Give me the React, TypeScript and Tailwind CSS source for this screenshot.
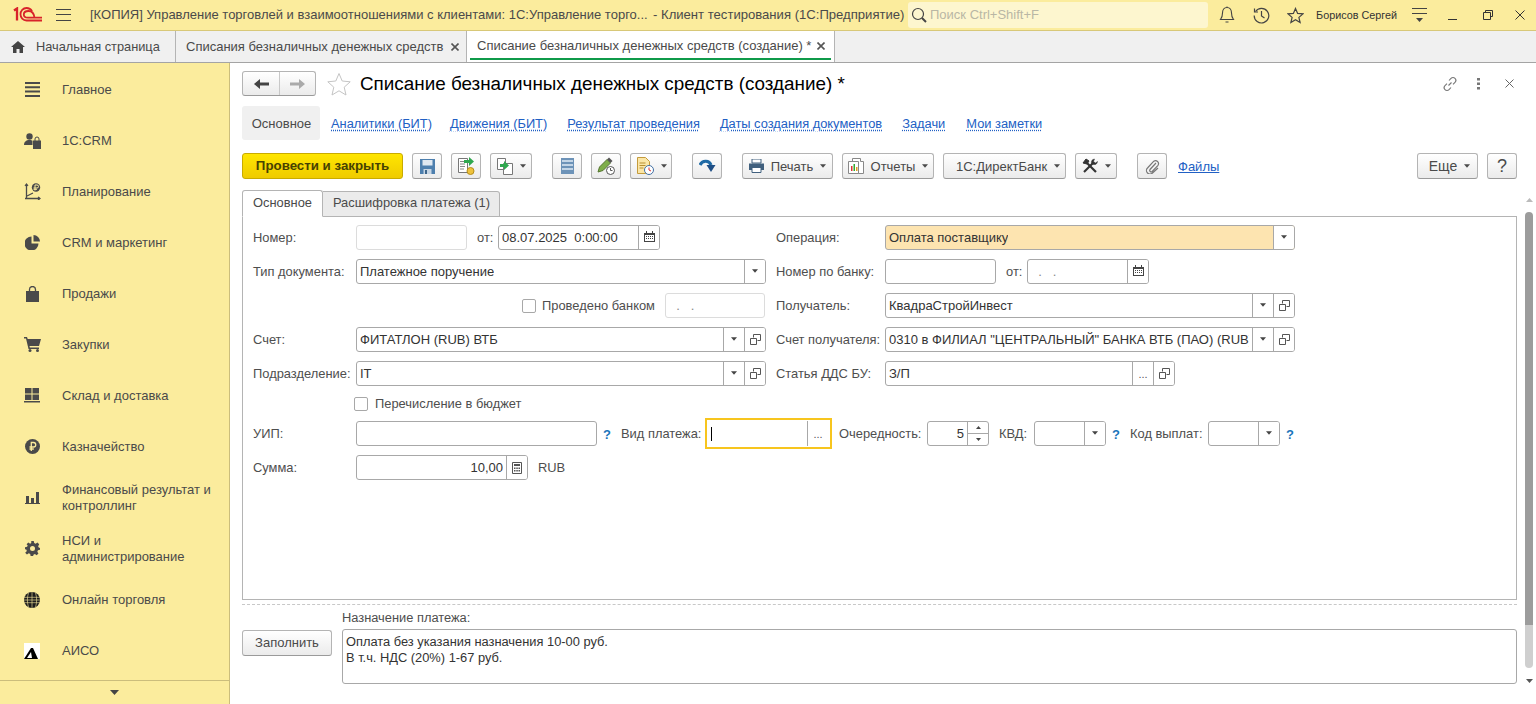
import React from "react";

const Drop = ({ c = "#4a4a4a", s = 6 }: { c?: string; s?: number }) => (
  <svg width={s} height="4" viewBox="0 0 7 4" className="shrink-0"><path d="M0 0h7L3.500 4z" fill={c} /></svg>
);
const OpenIc = () => (
  <svg width="11" height="11" viewBox="0 0 11 11" fill="none" stroke="#555"><path d="M3.500 3.500V.5h7v6h-3" /><path d="M.5 4.500h6v6h-6z" fill="#fff" /></svg>
);
const Cal = () => (
  <svg width="11" height="11" viewBox="0 0 11 11"><path d="M0 2h11v9H0z" fill="#444" /><path d="M2 0h1v2H2zM8 0h1v2H8z" fill="#444" /><path d="M1 4h9v6H1z" fill="#fff" /><path d="M2 5h1v1H2zM4 5h1v1H4zM6 5h1v1H6zM8 5h1v1H8zM2 7h1v1H2zM4 7h1v1H4zM6 7h1v1H6zM8 7h1v1H8z" fill="#444" /></svg>
);
const Calc = () => (
  <svg width="10" height="12" viewBox="0 0 10 12"><path d="M.5.500h9v11h-9z" fill="#fff" stroke="#555" /><path d="M2 2h6v2H2zM2 5.500h1.500V7H2zM4.300 5.500h1.500V7H4.300zM6.500 5.500H8V7H6.500zM2 8h1.500v1.500H2zM4.300 8h1.500v1.500H4.300zM6.500 8H8v1.500H6.500z" fill="#555" /></svg>
);

type Kind = "drop" | "open" | "dots" | "cal" | "calc";
const Addon = ({ k }: { k: Kind }) => (
  <div className="w-[21px] h-full shrink-0 bg-white border-l border-[#a8a8a8] flex items-center justify-center text-[#555]">
    {k === "drop" && <div className="-mt-[2px]"><Drop c="#444" s={6} /></div>}
    {k === "open" && <div className="-mt-[1px]"><OpenIc /></div>}
    {k === "dots" && <span className="text-[11px] leading-none mt-[2px]">...</span>}
    {k === "cal" && <div className="-mt-[2px]"><Cal /></div>}
    {k === "calc" && <Calc />}
  </div>
);

const Field = ({
  w, text = "", add = [], bg = "bg-white", border = "border-[#a8a8a8]", right = false, color = "text-[#333]",
}: { w: string; text?: string; add?: Kind[]; bg?: string; border?: string; right?: boolean; color?: string }) => (
  <div className={`${w} h-[25px] shrink-0 border ${border} ${bg} rounded-[3px] flex items-stretch overflow-hidden`}>
    <div className={`flex-1 min-w-0 px-[3px] flex items-center text-[13px] ${color} ${right ? "justify-end" : ""}`}>
      <span className="block whitespace-pre overflow-hidden">{text}</span>
    </div>
    {add.map((k, i) => <Addon key={i} k={k} />)}
  </div>
);

const Label = ({ w, children }: { w: string; children: React.ReactNode }) => (
  <div className={`${w} shrink-0 text-[12.9px] text-[#4e4e4e] whitespace-nowrap`}>{children}</div>
);
const Q = () => <span className="text-[13px] font-bold text-[#1b75bb]">?</span>;

const Btn = ({ w, children, arrow = false, cls = "" }: { w: string; children?: React.ReactNode; arrow?: boolean; cls?: string }) => (
  <div className={`${w} ${cls} h-[26px] shrink-0 rounded-[3px] border border-[#b4b4b4] border-b-[#9a9a9a] bg-gradient-to-b from-white to-[#ebebeb] flex items-center justify-center gap-[7px] text-[13px] text-[#4a4a4a] whitespace-nowrap`}>
    {children}
    {arrow && <Drop />}
  </div>
);

const TabLink = ({ children, cls = "" }: { children: React.ReactNode; cls?: string }) => (
  <span className={`${cls} text-[12.85px] text-[#2160c4] underline decoration-dotted underline-offset-2 whitespace-nowrap`}>{children}</span>
);

const G = "#4a4a4a";
const side: { t: React.ReactNode; i: React.ReactNode }[] = [
  { t: "Главное", i: <svg width="15" height="15" viewBox="0 0 15 15" fill={G}><path d="M0 0h15v2H0zM0 4.300h15v2H0zM0 8.600h15v2H0zM0 13h15v2H0z" /></svg> },
  { t: "1С:CRM", i: <svg width="17" height="16" viewBox="0 0 17 16" fill={G}><circle cx="5.500" cy="3.500" r="3.200" /><path d="M0 12c0-3 2-5 5.500-5 1.500 0 2.500.3 3 .7V12zM9 7.500h8V16H9z" /><path d="M11 8V6a2 2 0 0 1 4 0v2" fill="none" stroke={G} /></svg> },
  { t: "Планирование", i: <svg width="17" height="17" viewBox="0 0 17 17" fill="none" stroke={G}><path d="M2.500 1v15M1 15.500h15" strokeWidth="1.300" /><path d="M1 3l1.500-2L4 3M14 14l2 1.500-2 1.500M3 13l6-3" strokeWidth="1.200" /><circle cx="12" cy="4.500" r="4.200" fill={G} stroke="none" /><path d="M11 7.500V2h2a1.500 1.500 0 0 1 0 3H9.500M9.500 6.300H13" stroke="#fbec9d" /></svg> },
  { t: "CRM и маркетинг", i: <svg width="15" height="15" viewBox="0 0 15 15" fill={G}><path d="M6.500 1.500v7h7a7 7 0 1 1-7-7z" /><path d="M8.500 0a6.500 6.500 0 0 1 6.500 6.500H8.500z" /></svg> },
  { t: "Продажи", i: <svg width="13" height="16" viewBox="0 0 13 16" fill={G}><path d="M0 5h13v11H0z" /><path d="M3.500 7V3.500a3 3 0 0 1 6 0V7" fill="none" stroke={G} strokeWidth="1.300" /></svg> },
  { t: "Закупки", i: <svg width="17" height="15" viewBox="0 0 17 15" fill={G}><path d="M0 0h3l.7 2H17l-2 7H5.500l.3 1.500H15V12H4.500L2 1.500H0z" /><circle cx="6" cy="13.500" r="1.500" /><circle cx="13.500" cy="13.500" r="1.500" /></svg> },
  { t: "Склад и доставка", i: <svg width="16" height="15" viewBox="0 0 16 15" fill={G}><path d="M1 0h6.500v5.500H1zM8.500 0H15v5.500H8.500zM1 6.500h6.500V12H1zM8.500 6.500H15V12H8.500zM0 13h16v1.500H0z" /></svg> },
  { t: "Казначейство", i: <svg width="15" height="15" viewBox="0 0 15 15"><circle cx="7.500" cy="7.500" r="7.500" fill={G} /><path d="M6.300 12V3.500h2.200a2.200 2.200 0 0 1 0 4.500H4.500M4.500 10h4.300" fill="none" stroke="#fbec9d" strokeWidth="1.300" /></svg> },
  { t: <>Финансовый результат и<br />контроллинг</>, i: <svg width="15" height="12" viewBox="0 0 15 12" fill={G}><path d="M1 4h3v7H1zM6 6h3v5H6zM11 0h3v11h-3zM0 11h15v1H0z" /></svg> },
  { t: <>НСИ и<br />администрирование</>, i: <svg width="15" height="15" viewBox="0 0 24 24" fill={G}><path fillRule="evenodd" d="M10 0h4l.7 3.300 2.300 1 2.900-1.800 2.800 2.800L21 8.200l1 2.300 2 .5v3l-3.300.7-1 2.300 1.800 2.900-2.800 2.800-2.900-1.800-2.300 1-.5 2h-4l-.7-3.300-2.300-1-2.900 1.800-2.800-2.800L3 15.800l-1-2.300-2-.5v-3l3.300-.7 1-2.300L2.500 5.300l2.800-2.800L8.200 4.300l1.800-1zM12 8a4 4 0 1 0 0 8 4 4 0 0 0 0-8z" /></svg> },
  { t: "Онлайн торговля", i: <svg width="16" height="16" viewBox="0 0 16 16"><circle cx="8" cy="8" r="8" fill="#1c1c1c" /><path d="M0 5.300h16M0 8h16M0 10.700h16M8 0v16M4.500 1c-1.500 4-1.500 10 0 14M11.500 1c1.500 4 1.500 10 0 14" stroke="#fbec9d" strokeWidth=".6" fill="none" /></svg> },
  { t: "АИСО", i: <svg width="16" height="16" viewBox="0 0 16 16"><path d="M0 0h16v16H0z" fill="#fff" /><path d="M0 16L7 5l2 0 5 11z" fill="#000" /><path d="M3 15l4-6 1 6z" fill="#fff" /></svg> },
];

export default function App() {
  return (
    <div className="w-[1536px] h-[704px] overflow-hidden flex flex-col bg-white font-['Liberation_Sans',Arial,sans-serif]">
      {/* Title bar */}
      <div className="h-[31px] shrink-0 bg-[#fbec9d] border-b border-[#d8c878] flex items-center">
        <div className="w-[90px] shrink-0 flex items-center">
          <svg width="30" height="16" viewBox="0 0 30 16" className="ml-[13px]" fill="none" stroke="#d8232a" strokeWidth="1.800">
            <path d="M1 3.500L4 1.500V13.500" strokeWidth="2.300" />
            <path d="M19 4.200C18 2.300 16 1 13.500 1 10 1 7.500 3.800 7.500 7.200s2.500 6.300 6 6.300H29" />
            <path d="M21.500 10.500C20.800 5.500 18 4 15.500 4 12.500 4 10.800 5.400 10.800 7.400s1.700 3.200 4 3.200H29" />
          </svg>
          <svg width="15" height="12" viewBox="0 0 15 12" className="ml-[13px]" stroke="#444" fill="none"><path d="M0 .5h15M0 5.500h15M0 11.500h15" /></svg>
        </div>
        <div className="w-[563px] shrink-0 text-[13px] text-[#4a4a4a] whitespace-nowrap overflow-hidden">[КОПИЯ] Управление торговлей и взаимоотношениями с клиентами: 1С:Управление торго...</div>
        <div className="w-[255px] shrink-0 text-[13.1px] text-[#4a4a4a] whitespace-nowrap">- Клиент тестирования (1С:Предприятие)</div>
        <div className="w-[300px] h-[26px] shrink-0 bg-[#fdf6cf] rounded-[3px] flex items-center pl-[3px] gap-[2px]">
          <svg width="17" height="17" viewBox="0 0 17 17" fill="none" stroke="#444"><circle cx="7" cy="7" r="5.500" strokeWidth="1.200" /><path d="M11 11l4 4" strokeWidth="2" /></svg>
          <span className="text-[13px] text-[#b9b7a5] whitespace-nowrap">Поиск Ctrl+Shift+F</span>
        </div>
        <div className="w-[27px] shrink-0 flex justify-end">
          <svg width="16" height="18" viewBox="0 0 16 18" fill="none" stroke="#444"><path d="M8 1.500c-3 0-4.500 2.500-4.500 5.500 0 3-.8 5-2 6.500h13c-1.200-1.500-2-3.500-2-6.500 0-3-1.500-5.500-4.500-5.500zM6.500 16h3" strokeWidth="1.100" /><path d="M8 .5v1" /></svg>
        </div>
        <div className="w-[35px] shrink-0 flex justify-end">
          <svg width="17" height="17" viewBox="0 0 17 17" fill="none" stroke="#444" strokeWidth="1.200"><path d="M2.500 4.500A7.300 7.300 0 1 1 1.200 8.500" /><path d="M1.500 1.500v3.500h3.500M8.500 4v5l3 2" /></svg>
        </div>
        <div className="w-[34px] shrink-0 flex justify-end">
          <svg width="17" height="17" viewBox="0 0 24 24" fill="none" stroke="#444" strokeWidth="1.700"><path d="M12 2l3 7 7.500.7-5.700 5 1.700 7.300L12 18l-6.500 4 1.700-7.300-5.700-5L9 9z" /></svg>
        </div>
        <div className="w-[93px] shrink-0 text-right text-[10.8px] text-[#333] whitespace-nowrap">Борисов Сергей</div>
        <div className="w-[30px] shrink-0 flex justify-end">
          <svg width="15" height="14" viewBox="0 0 15 14"><path d="M0 .5h15M0 5.500h15" stroke="#444" fill="none" /><path d="M4 10h7l-3.500 4z" fill="#444" /></svg>
        </div>
        <div className="w-[46px] shrink-0 flex justify-center pl-[4px] pt-[9px]"><div className="w-[9px] h-[1px] bg-[#333]" /></div>
        <div className="w-[30px] shrink-0 flex justify-center">
          <svg width="10" height="10" viewBox="0 0 10 10" fill="none" stroke="#333"><path d="M2.500 2.500V.5h7v6h-2" /><path d="M.5 2.500h7v7h-7z" /></svg>
        </div>
        <div className="w-[34px] shrink-0 flex justify-center">
          <svg width="10" height="10" viewBox="0 0 10 10" stroke="#333" fill="none"><path d="M.5.500l9 9M9.500.500l-9 9" /></svg>
        </div>
      </div>

      {/* Tab bar */}
      <div className="h-[32px] shrink-0 bg-[#f0f0f0] border-b border-[#a4a4a4] flex items-stretch text-[13px] text-[#4a4a4a]">
        <div className="w-[176px] shrink-0 border-r border-[#b4b4b4] flex items-center">
          <svg width="14" height="12" viewBox="0 0 14 12" fill="#444" className="ml-[11px]"><path d="M7 0l7 6h-2v6H8.500V8h-3v4H2V6H0z" /></svg>
          <span className="ml-[11px] whitespace-nowrap text-[12.8px]">Начальная страница</span>
        </div>
        <div className="w-[291px] shrink-0 border-r border-[#b4b4b4] flex items-center pl-[10px] gap-[8px]">
          <span className="whitespace-nowrap">Списания безналичных денежных средств</span>
          <svg width="8" height="8" viewBox="0 0 8 8" stroke="#555" strokeWidth="1.600"><path d="M.5.500l7 7M7.500.500l-7 7" /></svg>
        </div>
        <div className="w-[368px] shrink-0 border-r border-[#b4b4b4] bg-white flex flex-col px-[3px] pb-[2px]">
          <div className="flex-1 flex items-center pl-[7px] gap-[6px] pt-[2px]">
            <span className="whitespace-nowrap">Списание безналичных денежных средств (создание) *</span>
            <svg width="8" height="8" viewBox="0 0 8 8" stroke="#555" strokeWidth="1.600"><path d="M.5.500l7 7M7.500.500l-7 7" /></svg>
          </div>
          <div className="h-[2px] bg-[#0f9a4a]" />
        </div>
      </div>

      <div className="flex-1 min-h-0 flex">
        {/* Sidebar */}
        <div className="w-[230px] shrink-0 bg-[#fbec9d] border-r border-[#cbbd7c] flex flex-col">
          {side.map((s, i) => (
            <div key={i} className="h-[51px] shrink-0 flex items-center text-[13px] leading-[16px] text-[#4a4a4a] pt-[2px]">
              <div className="w-[62px] shrink-0 pl-[2px] flex justify-center">{s.i}</div>
              <div className="whitespace-nowrap">{s.t}</div>
            </div>
          ))}
          <div className="mt-[5px] flex-1 border-t border-[#cbbd7c] flex items-center justify-center pr-[1px]">
            <svg width="9" height="5" viewBox="0 0 9 5"><path d="M0 0h9L4.500 5z" fill="#444" /></svg>
          </div>
        </div>

        {/* Main */}
        <div className="flex-1 min-w-0 flex flex-col">
          <div className="pl-[12px] pr-[19px] shrink-0">
            {/* Header */}
            <div className="h-[25px] mt-[8px] flex items-center">
              <div className="w-[74px] h-[25px] shrink-0 rounded-[3px] border border-[#b4b4b4] border-b-[#9a9a9a] bg-gradient-to-b from-white to-[#ebebeb] flex items-center">
                <div className="w-[37px] h-full border-r border-[#c8c8c8] flex items-center justify-center">
                  <svg width="15" height="10" viewBox="0 0 15 10" fill="#444"><path d="M0 5l6-5v3.500h9v3H6V10z" /></svg>
                </div>
                <div className="flex-1 flex items-center justify-center">
                  <svg width="15" height="10" viewBox="0 0 15 10" fill="#aaa"><path d="M15 5L9 0v3.500H0v3h9V10z" /></svg>
                </div>
              </div>
              <svg width="24" height="24" viewBox="0 0 24 24" fill="none" stroke="#c4c4c4" className="ml-[11px]"><path d="M12 1.500l3.200 7.500 8 .8-6 5.400 1.800 7.800L12 18.800l-7 4.200 1.800-7.800-6-5.400 8-.8z" /></svg>
              <div className="ml-[9px] pt-[1px] text-[18.85px] text-black whitespace-nowrap">Списание безналичных денежных средств (создание) *</div>
              <div className="ml-auto flex items-center">
                <svg width="16" height="16" viewBox="0 0 16 16" fill="none" stroke="#777" strokeWidth="1.100"><path d="M6.500 9.500l3-3M7 4.500l2-2.200a2.700 2.700 0 0 1 4 4l-2 2M9 11.500l-2 2.200a2.700 2.700 0 0 1-4-4l2-2" /></svg>
                <svg width="4" height="12" viewBox="0 0 4 12" fill="#777" className="ml-[19px]"><path d="M0 0h3v2.500H0zM0 4.500h3V7H0zM0 9h3v2.500H0z" /></svg>
                <svg width="9" height="9" viewBox="0 0 9 9" stroke="#666" className="ml-[24px] mr-[3px]"><path d="M.5.500l8 8M8.500.500l-8 8" /></svg>
              </div>
            </div>

            {/* Page links */}
            <div className="mt-[10px] h-[34px] flex items-center">
              <div className="w-[78px] h-full shrink-0 rounded-[3px] bg-[#f0f0f0] flex items-center justify-center pt-[1px] pl-[1px] text-[13px] text-[#4a4a4a]">Основное</div>
              <div className="ml-[11px] flex items-center gap-[20px] pt-[1px]">
                <TabLink>Аналитики (БИТ)</TabLink>
                <TabLink cls="-ml-[2px]">Движения (БИТ)</TabLink>
                <TabLink>Результат проведения</TabLink>
                <TabLink>Даты создания документов</TabLink>
                <TabLink>Задачи</TabLink>
                <TabLink cls="ml-[1px]">Мои заметки</TabLink>
              </div>
            </div>

            {/* Toolbar */}
            <div className="mt-[13px] h-[26px] flex items-center">
              <div className="w-[161px] h-[26px] shrink-0 rounded-[3px] border border-[#c9ab00] bg-gradient-to-b from-[#ffe600] to-[#efcb00] flex items-center justify-center text-[13.3px] font-bold text-[#474200] whitespace-nowrap">Провести и закрыть</div>
              <Btn w="w-[30px]" cls="ml-[9px]">
                <svg width="15" height="15" viewBox="0 0 15 15"><path d="M0 0h15v15H0z" fill="#4d7fae" /><path d="M2.500 1h10v5.500h-10z" fill="#dfe8f1" /><path d="M3.500 10h8v5h-8z" fill="#c8d6e4" /><path d="M5 11h2v4H5z" fill="#3d668c" /></svg>
              </Btn>
              <Btn w="w-[30px]" cls="ml-[9px]">
                <svg width="18" height="18" viewBox="0 0 18 18"><path d="M1.500 1.500h9v14h-9z" fill="#fff" stroke="#777" /><path d="M3 4.500h5M3 7h5M3 9.500h5M3 12h4" stroke="#888" /><ellipse cx="13.500" cy="14" rx="3.500" ry="3.500" fill="#eec23c" stroke="#b48d1a" /><path d="M7 3h5V0l5 4.500L12 9V6H7z" fill="#2fa84f" /></svg>
              </Btn>
              <Btn w="w-[42px]" cls="ml-[9px]" arrow>
                <svg width="16" height="17" viewBox="0 0 16 17"><path d="M.5.500h8v11h-8z" fill="#fff" stroke="#777" /><path d="M6.500 5.500h9v11h-9z" fill="#fff" stroke="#777" /><path d="M3 6h4V3l5 4.500L7 12V9H3z" fill="#2fa84f" /></svg>
              </Btn>
              <Btn w="w-[30px]" cls="ml-[20px]">
                <svg width="13" height="16" viewBox="0 0 13 16"><path d="M0 0h13v16H0z" fill="#6d93b8" /><path d="M1 2h11v2H1zM1 6h11v2H1zM1 10h11v2H1z" fill="#c3d5e6" /></svg>
              </Btn>
              <Btn w="w-[30px]" cls="ml-[9px]">
                <svg width="18" height="18" viewBox="0 0 18 18"><path d="M1 15l1.500-5L10 2.500l3.500 3.500L6 13.500z" fill="#7fae4a" stroke="#55762f" /><path d="M10 2.500L12 .5l3.500 3.500-2 2z" fill="#555" /><circle cx="13.500" cy="13.500" r="4" fill="#fff" stroke="#555" /><path d="M13.500 11v2.500h2" stroke="#555" fill="none" /></svg>
              </Btn>
              <Btn w="w-[42px]" cls="ml-[9px]" arrow>
                <svg width="18" height="18" viewBox="0 0 18 18"><path d="M1.500.500h8l4 4v12h-12z" fill="#fbe6a6" stroke="#c49b3c" /><path d="M3.500 6h6M3.500 8.500h6M3.500 11h4" stroke="#b88f30" /><circle cx="13" cy="13" r="4.500" fill="#fff" stroke="#3f6ea3" /><path d="M13 10.500V13l2 1" stroke="#d33" fill="none" /></svg>
              </Btn>
              <Btn w="w-[30px]" cls="ml-[20px]">
                <svg width="17" height="14" viewBox="0 0 17 14"><path d="M1 6C3 1.500 10 .5 12 6" fill="none" stroke="#1f6aa5" strokeWidth="3.200" /><path d="M7.500 6h9L12 13z" fill="#1f4f86" /></svg>
              </Btn>
              <Btn w="w-[91px]" cls="ml-[20px]" arrow>
                <svg width="15" height="14" viewBox="0 0 15 14"><path d="M3 0h9v4H3z" fill="#fff" stroke="#41607e" /><path d="M0 4.500h15V11H0z" fill="#41607e" /><path d="M3 8.500h9v5H3z" fill="#fff" stroke="#41607e" /></svg>
                <span className="pt-[2px]">Печать</span>
              </Btn>
              <Btn w="w-[92px]" cls="ml-[9px]" arrow>
                <svg width="16" height="16" viewBox="0 0 16 16"><path d="M4.500.500h8v3h3v12h-11z" fill="#fff" stroke="#888" /><path d="M.5 3.500h10v12H.5z" fill="#fff" stroke="#888" /><path d="M3 8h1.500v5H3z" fill="#d33" /><path d="M5.500 6h1.500v7H5.500z" fill="#3a3" /><path d="M8 9h1.500v4H8z" fill="#e0a020" /></svg>
                <span className="pt-[2px]">Отчеты</span>
              </Btn>
              <Btn w="w-[123px]" cls="ml-[9px]" arrow><span className="pl-[7px] pt-[2px]">1С:ДиректБанк</span></Btn>
              <Btn w="w-[42px]" cls="ml-[9px]" arrow>
                <svg width="16" height="16" viewBox="0 0 16 16" stroke="#333" fill="none"><path d="M2 14L11 5" strokeWidth="2.200" /><path d="M14 14L5 5" strokeWidth="2.200" /><path d="M1 5l3-4 3 2-2 3z" fill="#333" /><path d="M10 6a3 3 0 0 1 1-4.500l1.500-.5-1 2.500 2 1.500 2-1.500a3.500 3.500 0 0 1-4 3z" fill="#333" strokeWidth=".5" /></svg>
              </Btn>
              <Btn w="w-[30px]" cls="ml-[20px]">
                <svg width="15" height="15" viewBox="0 0 15 15" fill="none" stroke="#777" strokeWidth="1.200"><path d="M11 4L5 10.500a1.500 1.500 0 0 0 2.200 2L13 6.300A3 3 0 0 0 8.800 2.200L2.500 9a3.500 3.500 0 0 0 5 5L13 9" /></svg>
              </Btn>
              <span className="ml-[11px] pt-[2px] text-[13px] text-[#2160c4] underline">Файлы</span>
              <Btn w="w-[61px]" cls="ml-auto" arrow><span className="pl-[4px] text-[14px]">Еще</span></Btn>
              <Btn w="w-[30px]" cls="ml-[9px]"><span className="text-[18px]">?</span></Btn>
            </div>
          </div>

          {/* Body with scrollbar */}
          <div className="flex-1 min-h-0 flex">
            <div className="flex-1 min-w-0 pl-[12px] flex flex-col">
              <div className="mt-[11px] h-[27px] flex items-end text-[12.9px] text-[#4a4a4a] -mb-[1px] relative z-10">
                <div className="w-[81px] h-[27px] border border-[#b4b4b4] border-b-white bg-white rounded-t-[3px] flex items-center justify-center pb-[1px]">Основное</div>
                <div className="w-[177px] h-[26px] border border-l-0 border-[#b4b4b4] bg-[#ebebeb] rounded-tr-[3px] flex items-center justify-center pb-[3px] pl-[1px] whitespace-nowrap">Расшифровка платежа (1)</div>
              </div>

              <div className="w-[1275px] h-[384px] shrink-0 border border-[#b4b4b4] pl-[10px] pt-[8px] flex flex-col gap-[9px]">
                {/* row 1 */}
                <div className="h-[25px] flex items-center">
                  <div className="w-[523px] shrink-0 flex items-center">
                    <Label w="w-[103px]">Номер:</Label>
                    <Field w="w-[111px]" border="border-[#dcdcdc]" />
                    <Label w="w-[31px] pl-[10px]">от:</Label>
                    <Field w="w-[162px]" text="08.07.2025  0:00:00" add={["cal"]} />
                  </div>
                  <Label w="w-[109px]">Операция:</Label>
                  <Field w="w-[410px]" text="Оплата поставщику" bg="bg-[#fde4b0]" add={["drop"]} />
                </div>
                {/* row 2 */}
                <div className="h-[25px] flex items-center">
                  <div className="w-[523px] shrink-0 flex items-center">
                    <Label w="w-[103px]">Тип документа:</Label>
                    <Field w="w-[410px]" text="Платежное поручение" add={["drop"]} />
                  </div>
                  <Label w="w-[109px]">Номер по банку:</Label>
                  <Field w="w-[111px]" />
                  <Label w="w-[31px] pl-[10px]">от:</Label>
                  <Field w="w-[122px]" text="  .   ." add={["cal"]} color="text-[#888]" />
                </div>
                {/* row 3 */}
                <div className="h-[25px] flex items-center">
                  <div className="w-[523px] shrink-0 flex items-center pl-[269px]">
                    <div className="w-[14px] h-[14px] border border-[#a8a8a8] rounded-[2px] bg-white shrink-0" />
                    <Label w="w-[129px] pl-[6px]">Проведено банком</Label>
                    <Field w="w-[100px]" text="  .   ." border="border-[#dcdcdc]" color="text-[#888]" />
                  </div>
                  <Label w="w-[109px]">Получатель:</Label>
                  <Field w="w-[410px]" text="КвадраСтройИнвест" add={["drop", "open"]} />
                </div>
                {/* row 4 */}
                <div className="h-[25px] flex items-center">
                  <div className="w-[523px] shrink-0 flex items-center">
                    <Label w="w-[103px]">Счет:</Label>
                    <Field w="w-[410px]" text="ФИТАТЛОН (RUB) ВТБ" add={["drop", "open"]} />
                  </div>
                  <Label w="w-[109px]">Счет получателя:</Label>
                  <Field w="w-[410px]" text={'0310 в ФИЛИАЛ "ЦЕНТРАЛЬНЫЙ" БАНКА ВТБ (ПАО) (RUB)'} add={["drop", "open"]} />
                </div>
                {/* row 5 */}
                <div className="h-[25px] flex items-center">
                  <div className="w-[523px] shrink-0 flex items-center">
                    <Label w="w-[103px]">Подразделение:</Label>
                    <Field w="w-[410px]" text="IT" add={["drop", "open"]} />
                  </div>
                  <Label w="w-[109px]">Статья ДДС БУ:</Label>
                  <Field w="w-[290px]" text="З/П" add={["dots", "open"]} />
                </div>
                {/* row 6 */}
                <div className="h-[17px] flex items-center pl-[101px]">
                  <div className="w-[14px] h-[14px] border border-[#a8a8a8] rounded-[2px] bg-white shrink-0" />
                  <Label w="w-[200px] pl-[7px]">Перечисление в бюджет</Label>
                </div>
                {/* row 7 */}
                <div className="h-[25px] flex items-center">
                  <Label w="w-[103px]">УИП:</Label>
                  <Field w="w-[241px]" />
                  <div className="w-[24px] shrink-0 pl-[6px]"><Q /></div>
                  <Label w="w-[84px]">Вид платежа:</Label>
                  <div className="w-[127px] h-[31px] shrink-0 -my-[3px] border-2 border-[#f7c51e] flex items-stretch py-[1px]">
                    <div className="flex-1 flex items-center pl-[4px]"><div className="w-[1px] h-[14px] bg-black" /></div>
                    <Addon k="dots" />
                    <div className="w-[2px]" />
                  </div>
                  <Label w="w-[95px] pl-[7px]">Очередность:</Label>
                  <div className="w-[62px] h-[25px] shrink-0 border border-[#a8a8a8] rounded-[3px] bg-white flex items-stretch overflow-hidden">
                    <div className="flex-1 flex items-center justify-end pr-[3px] text-[13px] text-[#333]">5</div>
                    <div className="w-[21px] border-l border-[#a8a8a8] flex flex-col">
                      <div className="flex-1 border-b border-[#a8a8a8] flex items-center justify-center"><svg width="5" height="3" viewBox="0 0 5 3"><path d="M0 3h5L2.500 0z" fill="#444" /></svg></div>
                      <div className="flex-1 flex items-center justify-center"><svg width="5" height="3" viewBox="0 0 5 3"><path d="M0 0h5L2.500 3z" fill="#444" /></svg></div>
                    </div>
                  </div>
                  <Label w="w-[45px] pl-[10px]">КВД:</Label>
                  <Field w="w-[72px]" add={["drop"]} />
                  <div className="w-[24px] shrink-0 pl-[6px]"><Q /></div>
                  <Label w="w-[78px]">Код выплат:</Label>
                  <Field w="w-[72px]" add={["drop"]} />
                  <div className="shrink-0 pl-[6px]"><Q /></div>
                </div>
                {/* row 8 */}
                <div className="h-[25px] flex items-center">
                  <Label w="w-[103px]">Сумма:</Label>
                  <Field w="w-[172px]" text="10,00" right add={["calc"]} />
                  <Label w="w-[40px] pl-[10px]">RUB</Label>
                </div>
              </div>

              <div className="w-[1275px] h-[1px] mt-[4px] border-t border-dashed border-[#c8c8c8]" />

              <div className="w-[1275px] flex mt-[5px]">
                <div className="w-[100px] shrink-0 pt-[20px]">
                  <div className="w-[90px] h-[26px] rounded-[3px] border border-[#b4b4b4] border-b-[#9a9a9a] bg-gradient-to-b from-white to-[#ebebeb] flex items-center justify-center text-[13px] text-[#4a4a4a]">Заполнить</div>
                </div>
                <div className="flex-1 min-w-0">
                  <div className="h-[19px] text-[12.85px] text-[#4e4e4e] leading-[15px]">Назначение платежа:</div>
                  <div className="h-[55px] border border-[#a8a8a8] rounded-[3px] px-[3px] pt-[4px] text-[12.85px] leading-[16px] text-[#333]">
                    Оплата без указания назначения 10-00 руб.<br />В т.ч. НДС (20%) 1-67 руб.
                  </div>
                </div>
              </div>
            </div>

            {/* Scrollbar */}
            <div className="w-[19px] shrink-0 flex flex-col items-center pl-[5px] pt-[19px]">
              <svg width="7" height="4" viewBox="0 0 7 4" className="mb-[10px]"><path d="M0 4h7L3.500 0z" fill="#bbb" /></svg>
              <div className="w-[8px] h-[413px] bg-[#9c9c9c] rounded-t-[4px]" />
              <div className="w-[8px] h-[43px] bg-[#cfcfcf] rounded-b-[4px]" />
              <svg width="7" height="4" viewBox="0 0 7 4" className="mt-[11px]"><path d="M0 0h7L3.500 4z" fill="#555" /></svg>
            </div>
          </div>
        </div>
      </div>
    </div>
  );
}
